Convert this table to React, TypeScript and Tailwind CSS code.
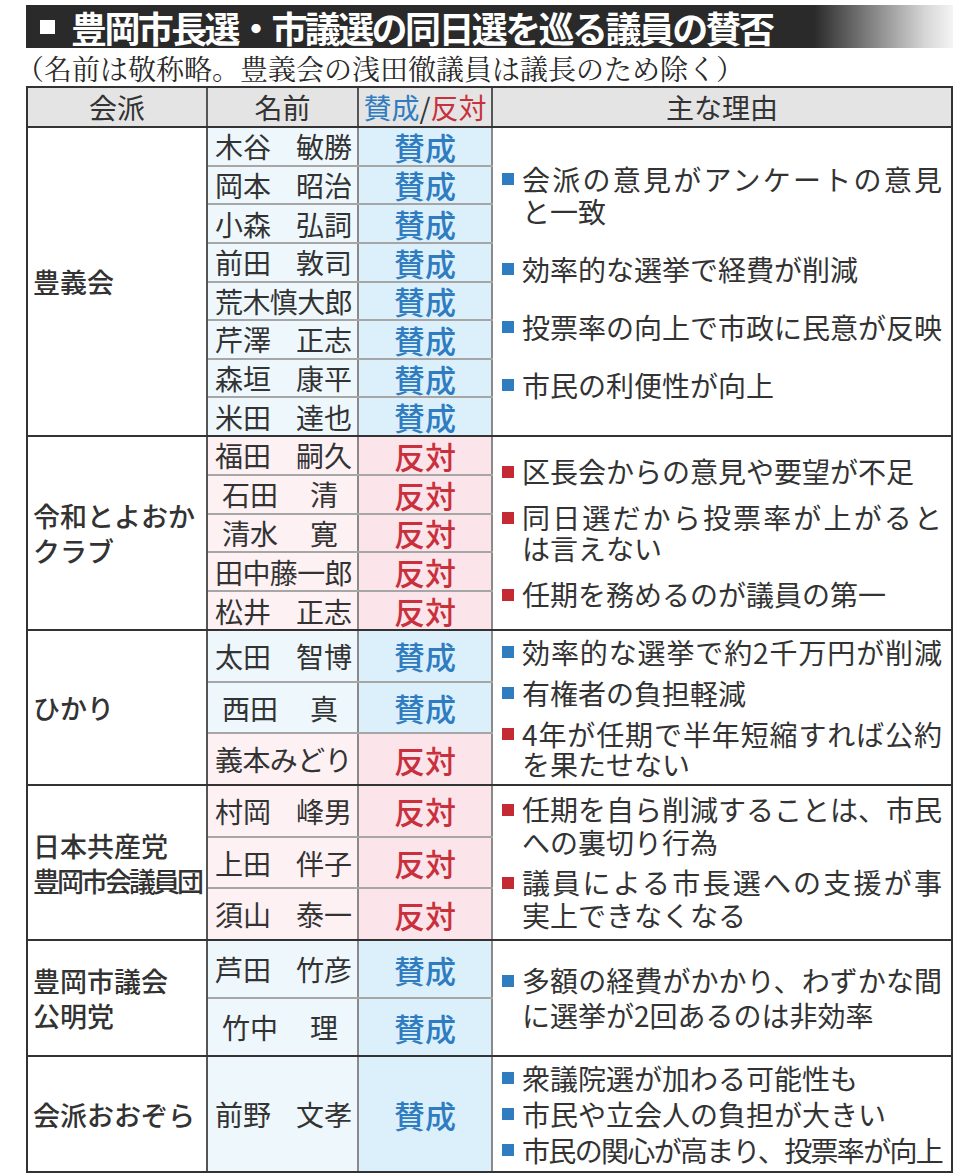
import React from "react";

type Vote = "y" | "n";
type Row = { s: string; g?: string; v: Vote; pad?: boolean };
type Item = { c: "b" | "r"; lines: { t: string; j?: boolean; tight?: boolean }[] };
type Group = {
  label: string[];
  labelTight?: number[];
  h: string;
  last?: boolean;
  rows: Row[];
  lh: string;
  bh: string;
  gap: string;
  items: Item[];
};

const groups: Group[] = [
  {
    label: ["豊義会"],
    h: "h-[309px]",
    rows: [
      { s: "木谷", g: "敏勝", v: "y" },
      { s: "岡本", g: "昭治", v: "y" },
      { s: "小森", g: "弘詞", v: "y" },
      { s: "前田", g: "敦司", v: "y" },
      { s: "荒木慎大郎", v: "y" },
      { s: "芹澤", g: "正志", v: "y" },
      { s: "森垣", g: "康平", v: "y" },
      { s: "米田", g: "達也", v: "y" },
    ],
    lh: "leading-[32px]",
    bh: "h-[32px]",
    gap: "gap-[26px]",
    items: [
      { c: "b", lines: [{ t: "会派の意見がアンケートの意見", j: true }, { t: "と一致" }] },
      { c: "b", lines: [{ t: "効率的な選挙で経費が削減" }] },
      { c: "b", lines: [{ t: "投票率の向上で市政に民意が反映", j: true }] },
      { c: "b", lines: [{ t: "市民の利便性が向上" }] },
    ],
  },
  {
    label: ["令和とよおか", "クラブ"],
    h: "h-[194px]",
    rows: [
      { s: "福田", g: "嗣久", v: "n" },
      { s: "石田", g: "清", v: "n", pad: true },
      { s: "清水", g: "寛", v: "n", pad: true },
      { s: "田中藤一郎", v: "n" },
      { s: "松井", g: "正志", v: "n" },
    ],
    lh: "leading-[31px]",
    bh: "h-[31px]",
    gap: "gap-[15px]",
    items: [
      { c: "r", lines: [{ t: "区長会からの意見や要望が不足" }] },
      { c: "r", lines: [{ t: "同日選だから投票率が上がると", j: true }, { t: "は言えない" }] },
      { c: "r", lines: [{ t: "任期を務めるのが議員の第一" }] },
    ],
  },
  {
    label: ["ひかり"],
    h: "h-[155px]",
    rows: [
      { s: "太田", g: "智博", v: "y" },
      { s: "西田", g: "真", v: "y", pad: true },
      { s: "義本みどり", v: "n" },
    ],
    lh: "leading-[30px]",
    bh: "h-[30px]",
    gap: "gap-[11px]",
    items: [
      { c: "b", lines: [{ t: "効率的な選挙で約2千万円が削減", j: true }] },
      { c: "b", lines: [{ t: "有権者の負担軽減" }] },
      { c: "r", lines: [{ t: "4年が任期で半年短縮すれば公約", j: true }, { t: "を果たせない" }] },
    ],
  },
  {
    label: ["日本共産党", "豊岡市会議員団"],
    labelTight: [1],
    h: "h-[155px]",
    rows: [
      { s: "村岡", g: "峰男", v: "n" },
      { s: "上田", g: "伴子", v: "n" },
      { s: "須山", g: "泰一", v: "n" },
    ],
    lh: "leading-[33px]",
    bh: "h-[33px]",
    gap: "gap-[7px]",
    items: [
      { c: "r", lines: [{ t: "任期を自ら削減することは、市民", j: true }, { t: "への裏切り行為" }] },
      { c: "r", lines: [{ t: "議員による市長選への支援が事", j: true }, { t: "実上できなくなる" }] },
    ],
  },
  {
    label: ["豊岡市議会", "公明党"],
    h: "h-[116px]",
    rows: [
      { s: "芦田", g: "竹彦", v: "y" },
      { s: "竹中", g: "理", v: "y", pad: true },
    ],
    lh: "leading-[35px]",
    bh: "h-[35px]",
    gap: "gap-0",
    items: [
      { c: "b", lines: [{ t: "多額の経費がかかり、わずかな間", j: true }, { t: "に選挙が2回あるのは非効率" }] },
    ],
  },
  {
    label: ["会派おおぞら"],
    h: "h-[114px]",
    last: true,
    rows: [{ s: "前野", g: "文孝", v: "y" }],
    lh: "leading-[36px]",
    bh: "h-[36px]",
    gap: "gap-0",
    items: [
      { c: "b", lines: [{ t: "衆議院選が加わる可能性も" }] },
      { c: "b", lines: [{ t: "市民や立会人の負担が大きい" }] },
      { c: "b", lines: [{ t: "市民の関心が高まり、投票率が向上", j: true, tight: true }] },
    ],
  },
];

function NameCell({ r }: { r: Row }) {
  const bg = r.v === "y" ? "bg-[#eef7fc]" : "bg-[#fdf1f4]";
  return (
    <div className={`w-[151px] h-full flex items-center pl-[7px] border-r-2 border-[#8a8a8a] ${bg}`}>
      {r.g ? (
        <div className={`w-[137px] flex justify-between text-[28px] leading-none ${r.pad ? "pl-[7px] pr-[14px]" : ""}`}>
          <span>{r.s}</span>
          <span>{r.g}</span>
        </div>
      ) : (
        <div className="w-[137px] text-[28px] leading-none tracking-[-0.6px] whitespace-nowrap">{r.s}</div>
      )}
    </div>
  );
}

function VoteCell({ v }: { v: Vote }) {
  return v === "y" ? (
    <div className="w-[134px] h-full flex items-center justify-center border-r-2 border-[#8a8a8a] bg-[#dcf0fb] text-[31px] font-medium text-[#2f7cc0] leading-none">
      賛成
    </div>
  ) : (
    <div className="w-[134px] h-full flex items-center justify-center border-r-2 border-[#8a8a8a] bg-[#fce4eb] text-[31px] font-medium text-[#c8303c] leading-none">
      反対
    </div>
  );
}

function GroupBlock({ g }: { g: Group }) {
  return (
    <div className={`flex ${g.h} ${g.last ? "" : "border-b-2 border-[#333]"}`}>
      <div className="w-[180px] h-full border-r-2 border-[#555] flex flex-col justify-center pl-[5px] text-[27px] font-medium leading-[35px]">
        {g.label.map((l, i) => (
          <div key={i} className={`whitespace-nowrap ${g.labelTight && g.labelTight.includes(i) ? "tracking-[-3px]" : ""}`}>
            {l}
          </div>
        ))}
      </div>
      <div className="w-[285px] h-full flex flex-col">
        {g.rows.map((r, i) => (
          <div key={i} className={`flex-1 flex min-h-0 ${i < g.rows.length - 1 ? "border-b-2 border-[#a6a6a6]" : ""}`}>
            <NameCell r={r} />
            <VoteCell v={r.v} />
          </div>
        ))}
      </div>
      <div className={`flex-1 h-full flex flex-col justify-center pl-[9px] ${g.gap}`}>
        {g.items.map((it, i) => (
          <div key={i} className="flex items-start">
            <div className={`${g.bh} flex items-center`}>
              <span className={`block w-[12px] h-[12px] ${it.c === "b" ? "bg-[#2f7cc0]" : "bg-[#c42a34]"}`} />
            </div>
            <div className={`ml-[8px] w-[420px] text-[28px] ${g.lh}`}>
              {it.lines.map((ln, k) => (
                <div
                  key={k}
                  className={`whitespace-nowrap ${ln.j ? "[text-align-last:justify] text-justify" : ""} ${ln.tight ? "tracking-[-1.8px]" : ""}`}
                >
                  {ln.t}
                </div>
              ))}
            </div>
          </div>
        ))}
      </div>
    </div>
  );
}

export default function App() {
  return (
    <div
      lang="ja"
      className="w-[980px] h-[1173px] overflow-hidden bg-white text-[#333] font-[family-name:'Noto_Sans_CJK_JP',sans-serif]"
    >
      <div className="pt-[5px]">
        <div className="ml-[26px] w-[927px] h-[43px] flex items-center bg-[linear-gradient(to_right,#2a2a2a_0%,#2a2a2a_85%,#d6d6d6_97%,#f4f4f4_100%)]">
          <span className="block ml-[14px] w-[15px] h-[14px] bg-white" />
          <span className="ml-[16px] text-white text-[36px] font-bold tracking-[-2.6px] leading-none whitespace-nowrap">
            豊岡市長選・市議選の同日選を巡る議員の賛否
          </span>
        </div>
        <div className="h-[38px] ml-[16px] pt-[3px] text-[28px] leading-[34px] whitespace-nowrap text-[#2a2a2a] font-[family-name:'Noto_Serif_CJK_JP','Noto_Sans_CJK_JP',serif]">
          （名前は敬称略。豊義会の浅田徹議員は議長のため除く）
        </div>
        <div className="ml-[26px] w-[927px] border-2 border-[#333]">
          <div className="flex h-[40px] bg-[#e4e4e4] border-b-2 border-[#333] text-[28px] leading-none">
            <div className="w-[180px] h-full border-r-2 border-[#555] flex items-center justify-center">会派</div>
            <div className="w-[151px] h-full border-r-2 border-[#555] flex items-center justify-center">名前</div>
            <div className="w-[134px] h-full border-r-2 border-[#555] flex items-center justify-center">
              <span className="text-[#2f7cc0]">賛成</span>
              <span>/</span>
              <span className="text-[#c8303c]">反対</span>
            </div>
            <div className="flex-1 h-full flex items-center justify-center">主な理由</div>
          </div>
          {groups.map((g, i) => (
            <GroupBlock key={i} g={g} />
          ))}
        </div>
      </div>
    </div>
  );
}
